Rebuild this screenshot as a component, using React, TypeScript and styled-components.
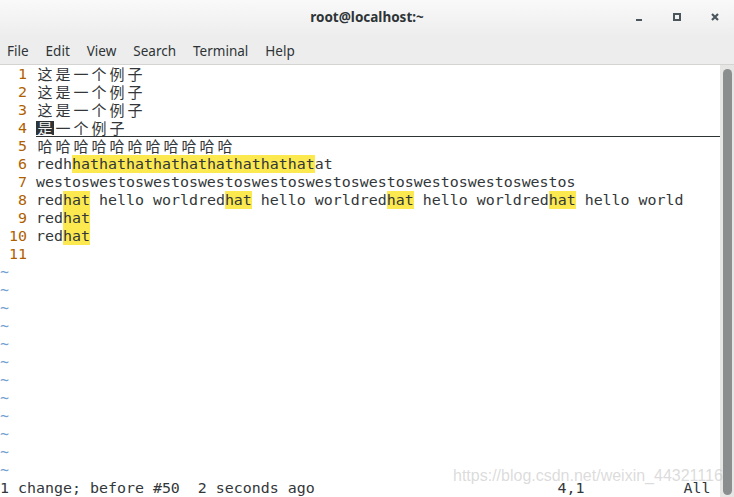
import React from 'react';
import styled, { createGlobalStyle } from 'styled-components';

const Global = createGlobalStyle`
  html, body { margin: 0; padding: 0; background: #fff; overflow: hidden; }
  #root { width: 734px; height: 497px; }
`;

const Window = styled.div`
  position: relative;
  width: 734px;
  height: 497px;
  display: flex;
  flex-direction: column;
  overflow: hidden;
  background: #ededed;
`;

const TitleBar = styled.header`
  box-sizing: border-box;
  height: 37px;
  padding-bottom: 3px;
  display: grid;
  grid-template-columns: 1fr auto 1fr;
  align-items: center;
  background: linear-gradient(#f9f9f9, #ededed);
`;

const Title = styled.div`
  grid-column: 2;
  font-family: 'Noto Sans', 'DejaVu Sans', sans-serif;
  font-weight: 700;
  font-size: 13.5px;
  color: #2e3436;
`;

const WinButtons = styled.div`
  grid-column: 3;
  justify-self: end;
  display: flex;
  height: 100%;
`;

const WinButton = styled.div`
  width: 38px;
  height: 100%;
  display: flex;
  align-items: center;
  justify-content: center;
`;

const MenuBar = styled.nav`
  box-sizing: border-box;
  height: 28px;
  padding-left: 7px;
  display: flex;
  align-items: center;
  gap: 17px;
  background: #ededed;
  border-bottom: 1px solid #d4d4d2;
`;

const MenuItem = styled.span`
  font-family: 'Noto Sans', 'DejaVu Sans', sans-serif;
  font-size: 13.5px;
  color: #2e3436;
`;

const Terminal = styled.main`
  display: flex;
  height: 432px;
  background: #fff;
`;

const TextArea = styled.div`
  width: 720px;
  display: flex;
  flex-direction: column;
  font-family: 'DejaVu Sans Mono', monospace;
  font-size: 14.95px;
  color: #333739;
`;

const Row = styled.div`
  display: flex;
  height: 18px;
  line-height: 18px;
  white-space: pre;
`;

const LineNo = styled.span`
  width: 27px;
  margin-right: 9px;
  text-align: right;
  color: #af5f00;
  flex: none;
`;

const Content = styled.span<{ $cursorLine?: boolean }>`
  flex: 1;
  display: flex;
  box-shadow: ${(p) => (p.$cursorLine ? 'inset 0 -1px 0 #2e3436' : 'none')};
`;

const Seg = styled.span<{ $hl?: boolean }>`
  background: ${(p) => (p.$hl ? '#fce94f' : 'transparent')};
`;

const Wide = styled.span<{ $cursor?: boolean }>`
  display: inline-block;
  width: 18px;
  text-align: center;
  font-family: 'Noto Sans CJK SC', 'DejaVu Sans', sans-serif;
  font-size: 15px;
  color: ${(p) => (p.$cursor ? '#f4f4f4' : '#333739')};
  background: ${(p) =>
    p.$cursor ? 'linear-gradient(#2e3436, #2e3436) no-repeat 0 2px / 100% 14px' : 'none'};
`;

const Tilde = styled.span`
  color: #729fcf;
`;

const Watermark = styled.div`
  position: absolute;
  left: 453px;
  top: 467px;
  font-family: 'Liberation Sans', Arial, sans-serif;
  font-size: 16px;
  color: rgba(190, 190, 190, 0.55);
  white-space: nowrap;
  pointer-events: none;
`;

const ScrollTrack = styled.div`
  flex: 1;
  background: #e6e6e5;
  display: flex;
  padding: 4px 2px 2px 3px;
  box-sizing: border-box;
`;

const Thumb = styled.div`
  width: 9px;
  flex: none;
  border-radius: 5px;
  background: #8b8e8f;
`;

type S = { t: string; hl?: boolean };

const cjk = (s: string, cursorFirst = false) =>
  Array.from(s).map((c, i) => (
    <Wide key={i} $cursor={cursorFirst && i === 0}>
      {c}
    </Wide>
  ));

const rh = (n: number): S[] => {
  const out: S[] = [];
  for (let i = 0; i < n; i++) {
    out.push({ t: 'red' }, { t: 'hat', hl: true }, { t: ' hello world' });
  }
  return out;
};

const segs = (arr: S[]) =>
  arr.map((s, i) => (
    <Seg key={i} $hl={s.hl}>
      {s.t}
    </Seg>
  ));

export default function App() {
  const lines: React.ReactNode[] = [
    cjk('这是一个例子'),
    cjk('这是一个例子'),
    cjk('这是一个例子'),
    cjk('是一个例子', true),
    cjk('哈哈哈哈哈哈哈哈哈哈哈'),
    segs([{ t: 'redh' }, { t: 'hathathathathathathathathat', hl: true }, { t: 'at' }]),
    segs([{ t: 'westos'.repeat(10) }]),
    segs(rh(4)),
    segs([{ t: 'red' }, { t: 'hat', hl: true }]),
    segs([{ t: 'red' }, { t: 'hat', hl: true }]),
    null,
  ];

  return (
    <>
      <Global />
      <Window>
        <TitleBar>
          <Title>root@localhost:~</Title>
          <WinButtons>
            <WinButton>
              <svg width="8" height="8" viewBox="0 0 8 8">
                <rect x="1" y="6" width="6" height="2" fill="#4a555c" />
              </svg>
            </WinButton>
            <WinButton>
              <svg width="8" height="8" viewBox="0 0 8 8">
                <rect x="1" y="1" width="6" height="6" fill="none" stroke="#4a555c" strokeWidth="2" />
              </svg>
            </WinButton>
            <WinButton>
              <svg width="8" height="8" viewBox="0 0 8 8">
                <path d="M1 1L7 7M7 1L1 7" stroke="#4a555c" strokeWidth="2.2" strokeLinecap="butt" />
              </svg>
            </WinButton>
          </WinButtons>
        </TitleBar>
        <MenuBar>
          {['File', 'Edit', 'View', 'Search', 'Terminal', 'Help'].map((m) => (
            <MenuItem key={m}>{m}</MenuItem>
          ))}
        </MenuBar>
        <Terminal>
          <TextArea>
            {lines.map((l, i) => (
              <Row key={i}>
                <LineNo>{i + 1}</LineNo>
                <Content $cursorLine={i === 3}>{l}</Content>
              </Row>
            ))}
            {Array.from({ length: 12 }).map((_, i) => (
              <Row key={'t' + i}>
                <Tilde>~</Tilde>
              </Row>
            ))}
            <Row>
              {'1 change; before #50  2 seconds ago' + ' '.repeat(27) + '4,1' + ' '.repeat(11) + 'All'}
            </Row>
          </TextArea>
          <ScrollTrack>
            <Thumb />
          </ScrollTrack>
        </Terminal>
        <Watermark>https://blog.csdn.net/weixin_44321116</Watermark>
      </Window>
    </>
  );
}
